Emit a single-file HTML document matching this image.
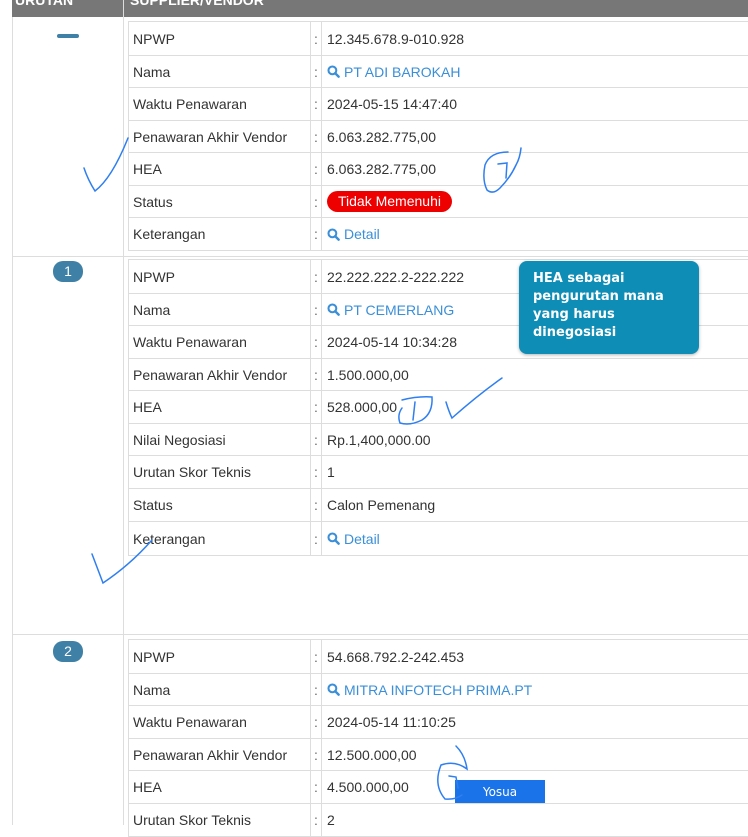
<!DOCTYPE html>
<html><head><meta charset="utf-8"><style>
*{margin:0;padding:0;box-sizing:border-box}
body{width:748px;height:825px;overflow:hidden;background:#fff;font-family:Arial,"Liberation Sans",Helvetica,sans-serif;font-size:14px;color:#333;position:relative}
.a{position:absolute}
.hd{left:12px;top:0;width:736px;height:17px;background:#777}
.hdt{color:#fff;font-weight:bold;font-size:14px;top:-8px}
.vl{position:absolute;width:1px;background:#ddd}
.hl{position:absolute;height:1px;background:#ddd}
.tb{position:absolute;left:128px;width:640px;border:1px solid #ddd;border-right:none}
.r{position:relative;border-top:1px solid #ddd;display:flex}
.r:first-child{border-top:none}
.l{width:182px;border-right:1px solid #ddd;padding-left:4px;display:flex;align-items:center}
.c{width:11px;border-right:1px solid #ddd;display:flex;align-items:center;justify-content:center;color:#666}
.v{padding-left:5px;display:flex;align-items:center}
.lk{color:#3a8fd8}
.lk svg{margin-right:4px}
.badge{background:#3e80a6;color:#fff;border-radius:10px;text-align:center;font-size:14px;line-height:21px}
</style></head><body>
<svg width="0" height="0" style="position:absolute"><defs><symbol id="mg" viewBox="0 0 14 14"><circle cx="5.8" cy="5.8" r="4.2" fill="none" stroke="#3a8fd8" stroke-width="2.2"/><path d="M8.8 8.8 L12.5 12.5" stroke="#3a8fd8" stroke-width="2.6" stroke-linecap="round"/></symbol></defs></svg>
<div class="a hd"></div>
<div class="a hdt" style="left:15px">URUTAN</div>
<div class="a hdt" style="left:130px">SUPPLIER/VENDOR</div>
<div class="a" style="left:123px;top:0;width:1px;height:17px;background:#ddd"></div>
<div class="vl" style="left:12px;top:17px;height:808px"></div>
<div class="vl" style="left:123px;top:17px;height:808px"></div>
<div class="hl" style="left:12px;top:256px;width:736px"></div>
<div class="hl" style="left:12px;top:634px;width:736px"></div>
<div class="a" style="left:57px;top:34px;width:22px;height:4px;border-radius:2px;background:#3e80a6"></div>
<div class="a badge" style="left:53px;top:261px;width:30px">1</div>
<div class="a badge" style="left:53px;top:641px;width:30px">2</div>

<div class="tb" style="top:21px">
<div class="r" style="height:33px"><div class="l">NPWP</div><div class="c">:</div><div class="v">12.345.678.9-010.928</div></div>
<div class="r" style="height:32px"><div class="l">Nama</div><div class="c">:</div><div class="v lk"><svg width="13" height="13"><use href="#mg"/></svg>PT ADI BAROKAH</div></div>
<div class="r" style="height:33px"><div class="l">Waktu Penawaran</div><div class="c">:</div><div class="v">2024-05-15 14:47:40</div></div>
<div class="r" style="height:32px"><div class="l">Penawaran Akhir Vendor</div><div class="c">:</div><div class="v">6.063.282.775,00</div></div>
<div class="r" style="height:33px"><div class="l">HEA</div><div class="c">:</div><div class="v">6.063.282.775,00</div></div>
<div class="r" style="height:32px"><div class="l">Status</div><div class="c">:</div><div class="v"><span style="background:#e00;color:#fff;border-radius:11px;padding:2px 11px;line-height:17px">Tidak Memenuhi</span></div></div>
<div class="r" style="height:33px"><div class="l">Keterangan</div><div class="c">:</div><div class="v lk"><svg width="13" height="13"><use href="#mg"/></svg>Detail</div></div>
</div>

<div class="tb" style="top:259px">
<div class="r" style="height:33px"><div class="l">NPWP</div><div class="c">:</div><div class="v">22.222.222.2-222.222</div></div>
<div class="r" style="height:32px"><div class="l">Nama</div><div class="c">:</div><div class="v lk"><svg width="13" height="13"><use href="#mg"/></svg>PT CEMERLANG</div></div>
<div class="r" style="height:33px"><div class="l">Waktu Penawaran</div><div class="c">:</div><div class="v">2024-05-14 10:34:28</div></div>
<div class="r" style="height:32px"><div class="l">Penawaran Akhir Vendor</div><div class="c">:</div><div class="v">1.500.000,00</div></div>
<div class="r" style="height:33px"><div class="l">HEA</div><div class="c">:</div><div class="v">528.000,00</div></div>
<div class="r" style="height:32px"><div class="l">Nilai Negosiasi</div><div class="c">:</div><div class="v">Rp.1,400,000.00</div></div>
<div class="r" style="height:33px"><div class="l">Urutan Skor Teknis</div><div class="c">:</div><div class="v">1</div></div>
<div class="r" style="height:33px"><div class="l">Status</div><div class="c">:</div><div class="v">Calon Pemenang</div></div>
<div class="r" style="height:34px"><div class="l">Keterangan</div><div class="c">:</div><div class="v lk"><svg width="13" height="13"><use href="#mg"/></svg>Detail</div></div>
</div>

<div class="tb" style="top:639px">
<div class="r" style="height:33px"><div class="l">NPWP</div><div class="c">:</div><div class="v">54.668.792.2-242.453</div></div>
<div class="r" style="height:32px"><div class="l">Nama</div><div class="c">:</div><div class="v lk"><svg width="13" height="13"><use href="#mg"/></svg>MITRA INFOTECH PRIMA.PT</div></div>
<div class="r" style="height:33px"><div class="l">Waktu Penawaran</div><div class="c">:</div><div class="v">2024-05-14 11:10:25</div></div>
<div class="r" style="height:32px"><div class="l">Penawaran Akhir Vendor</div><div class="c">:</div><div class="v">12.500.000,00</div></div>
<div class="r" style="height:33px"><div class="l">HEA</div><div class="c">:</div><div class="v">4.500.000,00</div></div>
<div class="r" style="height:33px"><div class="l">Urutan Skor Teknis</div><div class="c">:</div><div class="v">2</div></div>
</div>

<div class="a" style="left:519px;top:261px;width:180px;height:93px;background:#0e8db6;border-radius:8px;box-shadow:0 1px 3px rgba(0,0,0,.3);color:#fff;font-weight:bold;font-family:'DejaVu Sans',sans-serif;font-size:13px;line-height:18px;padding:9px 14px">HEA sebagai pengurutan mana yang harus dinegosiasi</div>

<div class="a" style="left:455px;top:780px;width:90px;height:23px;background:#1a73e8;color:#fff;font-size:12px;text-align:center;line-height:25px;font-family:'DejaVu Sans',sans-serif">Yosua</div>

<svg class="a" style="left:0;top:0" width="748" height="825" fill="none" stroke="#2f7ff0" stroke-width="1.5" stroke-linecap="round">
<path d="M84 168 Q88 180 95 191 Q112 178 128 138"/>
<path d="M508 152 Q490 152 485 165 Q482 180 487 190 Q493 195 500 188 Q510 178 516 165 Q520 158 521 148"/>
<path d="M498 164 L507 163 L506 178"/>
<path d="M402 408 Q397 415 400 423 Q410 426 422 420 Q433 413 432 397 Q418 396 402 400"/>
<path d="M415 402 L413 420"/>
<path d="M446 402 Q449 412 452 418 Q478 395 502 378"/>
<path d="M92 554 Q98 570 103 583 Q130 565 152 540"/>
<path d="M456 746 Q465 755 467 769 Q455 760 441 765 Q433 785 445 799 Q455 800 462 795"/>
<path d="M449 776 L456 777 L458 788"/>
</svg>
</body></html>
